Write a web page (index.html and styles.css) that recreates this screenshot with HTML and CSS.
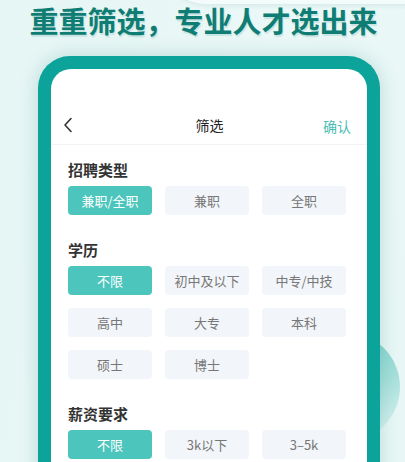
FILE: index.html
```html
<!DOCTYPE html>
<html lang="zh-CN">
<head>
<meta charset="utf-8">
<link rel="stylesheet" href="styles.css">
</head>
<body>
<div class="page">
  <div class="blob-top"></div>
  <div class="blob-circle"></div>
  <h1 class="headline">重重筛选，专业人才选出来</h1>
  <div class="phone">
    <div class="screen">
      <div class="nav">
        <svg class="back" width="10" height="16" viewBox="0 0 10 16"><path d="M8 1.5 L2 8 L8 14.5" fill="none" stroke="#333" stroke-width="1.6" stroke-linecap="round" stroke-linejoin="round"/></svg>
        <span class="nav-title">筛选</span>
        <span class="nav-ok">确认</span>
      </div>
      <div class="content">
        <div class="section">
          <div class="sec-title">招聘类型</div>
          <div class="opts">
            <div class="opt active">兼职/全职</div>
            <div class="opt">兼职</div>
            <div class="opt">全职</div>
          </div>
        </div>
        <div class="section">
          <div class="sec-title">学历</div>
          <div class="opts">
            <div class="opt active">不限</div>
            <div class="opt">初中及以下</div>
            <div class="opt">中专/中技</div>
            <div class="opt">高中</div>
            <div class="opt">大专</div>
            <div class="opt">本科</div>
            <div class="opt">硕士</div>
            <div class="opt">博士</div>
          </div>
        </div>
        <div class="section">
          <div class="sec-title">薪资要求</div>
          <div class="opts">
            <div class="opt active">不限</div>
            <div class="opt">3k以下</div>
            <div class="opt">3–5k</div>
          </div>
        </div>
      </div>
    </div>
  </div>
</div>
</body>
</html>
```
FILE: styles.css
```css
html, body {
  margin: 0;
  padding: 0;
}
body {
  width: 405px;
  height: 462px;
  overflow: hidden;
  font-family: "Noto Sans CJK SC", "Noto Sans", sans-serif;
}
.page {
  position: relative;
  width: 405px;
  height: 462px;
  overflow: hidden;
  background: linear-gradient(100deg, #e6f6f5 0%, #eaf8f7 60%, #e8f7f6 100%);
}
.blob-top {
  position: absolute;
  left: 165px;
  top: -40px;
  width: 280px;
  height: 44px;
  border-radius: 0 0 40px 40px;
  background: #f4fbfb;
  box-shadow: 0 2px 4px rgba(0, 90, 80, 0.08);
}
.blob-circle {
  position: absolute;
  left: 290px;
  top: 332px;
  width: 110px;
  height: 110px;
  border-radius: 50%;
  background: linear-gradient(160deg, #6ccac3 0%, #a7e0dc 55%, rgba(220, 244, 242, 0.2) 100%);
}
.headline {
  position: relative;
  margin: 0 0 0 2px;
  height: 40px;
  line-height: 40px;
  text-align: center;
  font-size: 29px;
  font-weight: 700;
  color: #107d74;
  text-shadow: 1px 2px 1px rgba(15, 124, 115, 0.15);
}
.phone {
  position: relative;
  margin: 16px 0 0 38px;
  width: 316px;
  height: 420px;
  border: 13px solid #0ca39b;
  border-bottom: none;
  border-radius: 32px 32px 0 0;
  background: #0ca39b;
  box-shadow: 0 0 20px rgba(0, 110, 100, 0.2);
}
.screen {
  background: #fff;
  height: 100%;
  border-radius: 20px 20px 0 0;
}
.nav {
  position: relative;
  height: 38px;
  padding-top: 37px;
  border-bottom: 1px solid #f1f3f4;
  display: flex;
  align-items: center;
  justify-content: center;
}
.back {
  position: absolute;
  left: 12px;
  top: 48px;
}
.nav-title {
  font-size: 14px;
  color: #222;
  margin-left: 1px;
}
.nav-ok {
  position: absolute;
  right: 16px;
  top: 47px;
  font-size: 14px;
  line-height: 20px;
  color: #4bbdb4;
}
.content {
  padding: 15px 20px 0 17px;
}
.section + .section {
  margin-top: 25px;
}
.sec-title {
  height: 20px;
  line-height: 20px;
  font-size: 15px;
  font-weight: 600;
  color: #333;
  margin-bottom: 6px;
}
.opts {
  display: grid;
  grid-template-columns: repeat(3, 84px);
  grid-auto-rows: 29px;
  column-gap: 13px;
  row-gap: 13px;
}
.opt {
  display: flex;
  align-items: center;
  justify-content: center;
  border-radius: 4px;
  background: #f2f5f9;
  color: #777;
  font-size: 13px;
}
.opt.active {
  background: #4cc5bd;
  color: #fff;
}
```
